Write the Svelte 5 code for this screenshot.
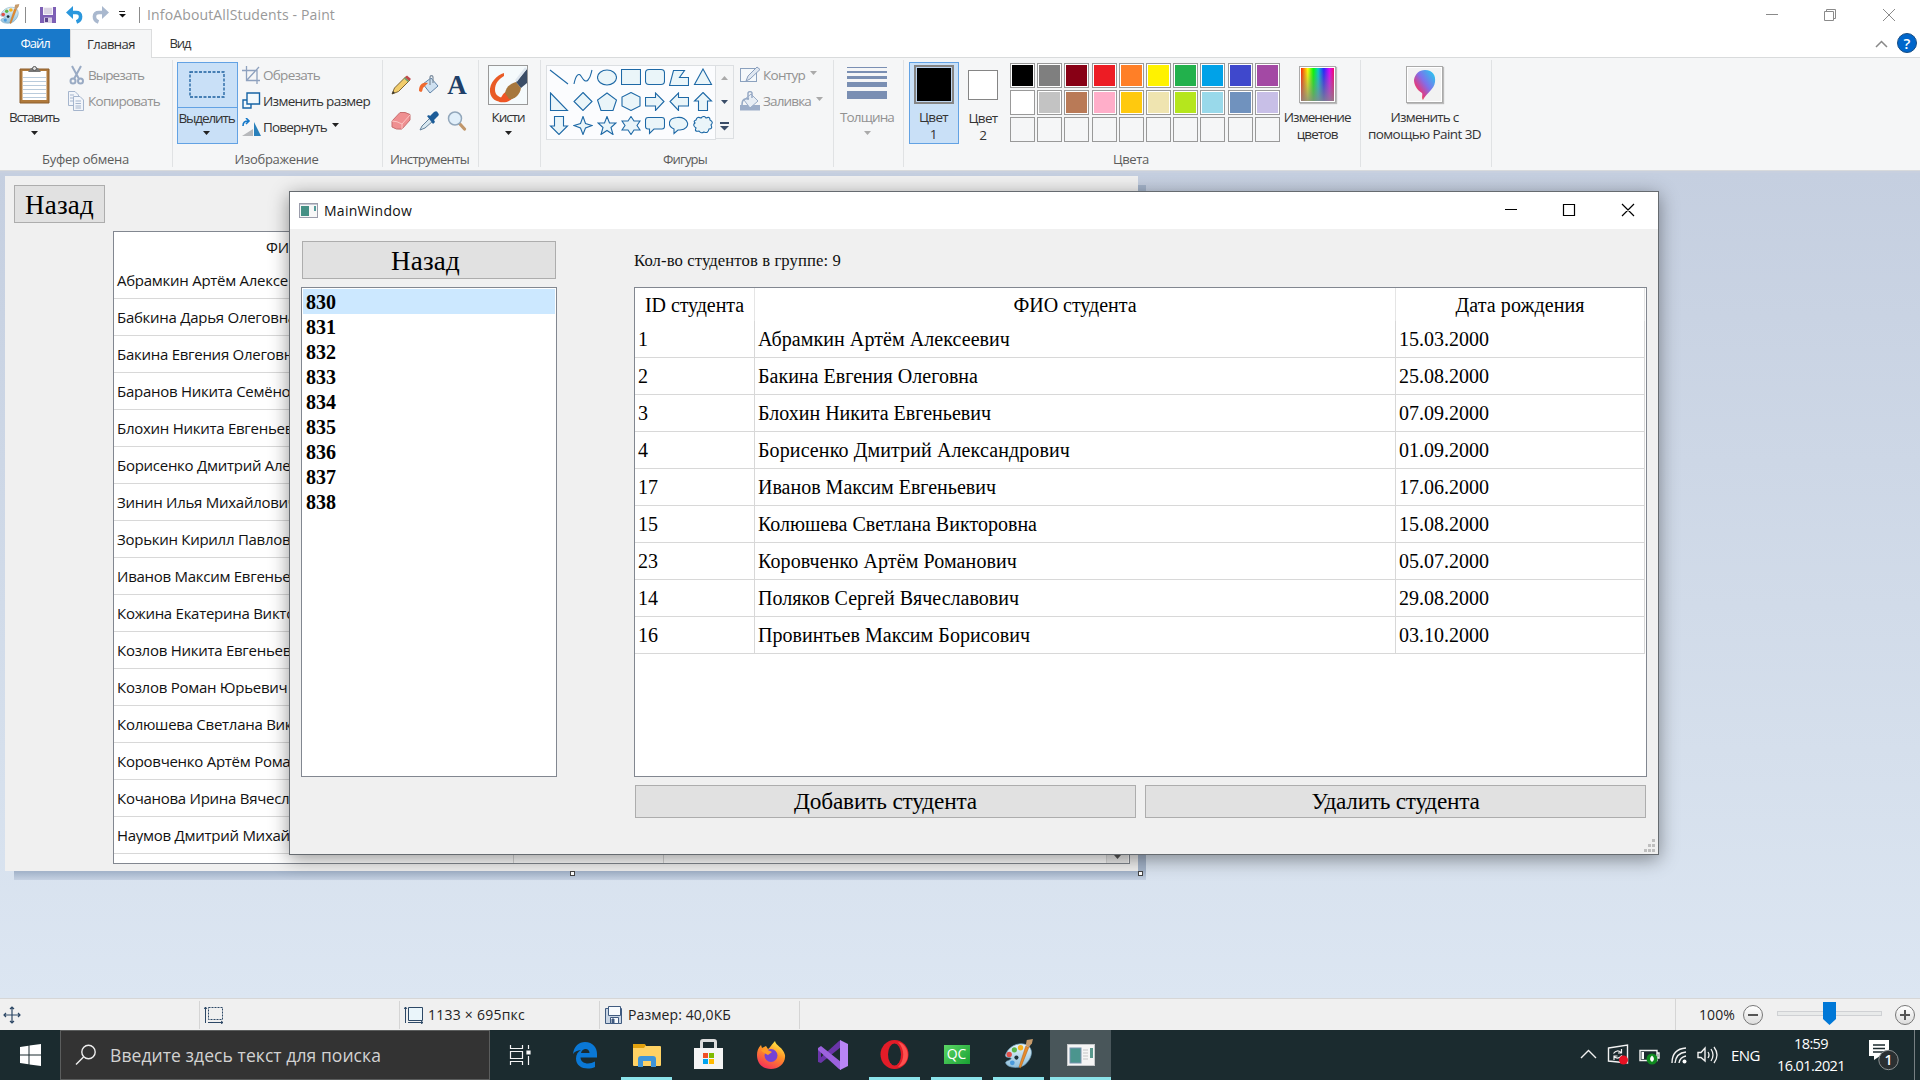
<script>
  // Spreads or tightens a label's letters so that it takes the given width.
  function fit(node, width) {
    if (!width) return;
    const natural = node.getBoundingClientRect().width;
    node.style.letterSpacing = (width - natural) / node.textContent.length + 'px';
  }

  const row1 = ['#000000', '#7f7f7f', '#880015', '#ed1c24', '#ff7f27', '#fff200', '#22b14c', '#00a2e8', '#3f48cc', '#a349a4'];
  const row2 = ['#ffffff', '#c3c3c3', '#b97a57', '#ffaec9', '#ffc90e', '#efe4b0', '#b5e61d', '#99d9ea', '#7092be', '#c8bfe7'];
  const palette = [...row1, ...row2, ...Array(10).fill(null)];

  const shapes = [
    'M1 2L19 16', 'M1 16C3 6 6 5 8 8S12 15 15 12S18 5 19 2', 'M19.500 9.500A9.500 7.500 0 1 1 .5 9.500A9.500 7.500 0 1 1 19.500 9.500Z',
    'M.5 1.500H19.500V16.500H.5Z', 'M4 1.500H16Q19.500 1.500 19.500 5V13Q19.500 16.500 16 16.500H4Q.5 16.500 .5 13V5Q.5 1.500 4 1.500Z',
    'M4.500 2.500H15.500L10.500 9.500H19.500V17.500H.5Z', 'M10 1L18.500 16.500H1.500Z',
    'M1.500 1L18.500 18.500H1.500Z', 'M10 .5L19 9.500L10 18.500L1 9.500Z', 'M10 1L19.500 8L16 18.500H4L.5 8Z',
    'M10 .5L19 5V14L10 18.500L1 14V5Z', 'M.5 5.500H10.500V1L19 9.500L10.500 18.500V14H.5Z', 'M19.500 5.500H9.500V1L1 9.500L9.500 18.500V14H19.500Z',
    'M10 .5L18.500 9H14.500V18.500H5.500V9H1.500Z',
    'M5.500 .5H14.500V10H18.500L10 18.500L1.500 10H5.500Z', 'M10 .5L12.500 7.500L19 9.500L12.500 12L10 18.500L7.500 12L1 9.500L7.500 7.500Z',
    'M10 .5L12.500 7H19L14 11.500L16 18.500L10 14.500L4 18.500L6 11.500L1 7H7.500Z',
    'M10 .5L13 5H19L16 9.500L19 14H13L10 18.500L7 14H1L4 9.500L1 5H7Z',
    'M3 1.500H17Q19.500 1.500 19.500 4V10.500Q19.500 13 17 13H9L4.500 17.500V13H3Q.5 13 .5 10.500V4Q.5 1.500 3 1.500Z',
    'M5 13C-2 10 -1 2 8 1.500C20 0 23 13 11 14H9L5 17.500Z',
    'M3 4Q4 0 8 2Q11 -1 13 2Q17 0 17 4Q21 6 18 9Q20 13 16 13Q15 18 11 16Q8 18 6 15Q1 16 3 12Q-1 9 2 7Q0 5 3 4Z'
  ];

  // Only the part of each name left of the front window shows.
  const canvasRows = [
    'Абрамкин Артём Алексе', 'Бабкина Дарья Олеговна', 'Бакина Евгения Олеговн', 'Баранов Никита Семёно',
    'Блохин Никита Евгеньев', 'Борисенко Дмитрий Але', 'Зинин Илья Михайлович', 'Зорькин Кирилл Павлов',
    'Иванов Максим Евгенье', 'Кожина Екатерина Викто', 'Козлов Никита Евгеньев', 'Козлов Роман Юрьевич',
    'Колюшева Светлана Вик', 'Коровченко Артём Рома', 'Кочанова Ирина Вячесла', 'Наумов Дмитрий Михайл'
  ];

  const groups = ['830', '831', '832', '833', '834', '835', '836', '837', '838'];

  const students = [
    ['1', 'Абрамкин Артём Алексеевич', '15.03.2000', 252],
    ['2', 'Бакина Евгения Олеговна', '25.08.2000', 220],
    ['3', 'Блохин Никита Евгеньевич', '07.09.2000', 233],
    ['4', 'Борисенко Дмитрий Александрович', '01.09.2000', 312],
    ['17', 'Иванов Максим Евгеньевич', '17.06.2000', 238],
    ['15', 'Колюшева Светлана Викторовна', '15.08.2000', 279],
    ['23', 'Коровченко Артём Романович', '05.07.2000', 259],
    ['14', 'Поляков Сергей Вячеславович', '29.08.2000', 261],
    ['16', 'Провинтьев Максим Борисович', '03.10.2000', 272]
  ];
</script>

{#snippet text(value, width)}<span class="t" use:fit={width}>{value}</span>{/snippet}

{#snippet caret(cls)}<svg class="caret {cls}" width="7" height="4"><path d="M0 0H7L3.500 4Z" /></svg>{/snippet}

{#snippet paintLogo(size)}
  <svg width={size} height={size} viewBox="0 0 30 30">
    <defs><linearGradient id="pal{size}" x1="0" y1="0" x2="0" y2="1"><stop offset="0" stop-color="#e6f4fa" /><stop offset="1" stop-color="#8fc0dc" /></linearGradient></defs>
    <path d="M3 14C7 5 19 2 25 7C30 12 27 20 21 25C16 29 5 28 3 24C1 21 7 21 8 19C8 17 0 19 3 14Z" fill="url(#pal{size})" stroke="#6d9db9" stroke-width=".7" />
    <circle cx="13" cy="18" r="2" fill="#1e333c" /><circle cx="6" cy="15" r="2.600" fill="#e0504a" /><circle cx="11" cy="10.500" r="2.500" fill="#5cb548" /><circle cx="17" cy="8.500" r="2.600" fill="#f6b221" /><circle cx="9" cy="23" r="2.300" fill="#4a9bdc" />
    <path d="M17 28L15.500 27L22 7L25 8Z" fill="#e98b2a" stroke="#a95e16" stroke-width=".5" /><path d="M22 6L23 1L29 0L28 4L25 8Z" fill="#c79b6b" />
  </svg>
{/snippet}

{#snippet pencil(a, b)}
  <path d="M1 19L3.500 13L15 1.500L19 5L7.500 16.500Z" fill={a} stroke={b} stroke-width="1" />
  <path d="M1 19L2 16L4 18Z" fill="#333" />
{/snippet}

<div class="desktop">
  <header class="titlebar">
    <div class="logo">{@render paintLogo(21)}</div>
    <i class="bar first"></i>
    <svg class="save" width="16" height="16"><path d="M0 0H16V16H0Z" fill="#7d5fb5" /><path d="M3 0H13V8H3Z" fill="#f5f3f8" /><path d="M4 2H12M4 4H12M4 6H12" stroke="#c0b4cf" /><path d="M4 10.500H12V16H4Z" fill="#d8cfe5" /><path d="M5 11H8V15H5Z" fill="#5e478c" /></svg>
    <svg class="undo" width="17" height="18"><path d="M4 6.500H10C16 6.500 16 14 10.500 16" fill="none" stroke="#2a97dd" stroke-width="3.600" /><path d="M0 6.500L7 0V13Z" fill="#2a97dd" /></svg>
    <svg class="redo" width="17" height="18"><path d="M13 6.500H7C1 6.500 1 14 6.500 16" fill="none" stroke="#a9b8ce" stroke-width="3.600" /><path d="M17 6.500L10 0V13Z" fill="#a9b8ce" /></svg>
    <svg class="more" width="8" height="7"><path d="M1 .5H7" stroke="#222" /><path d="M1 3H8L4.500 6.500Z" fill="#111" /></svg>
    <i class="bar second"></i>
    <span class="title">{@render text('InfoAboutAllStudents - Paint', 188)}</span>
    <svg class="controls" width="132" height="16" fill="none" stroke="#8a8a8a"><path d="M0 7.500H12M58.500 4.500H67.500V13.500H58.500ZM60.500 4V2.500H69.500V11.500H68M117 2L129 14M129 2L117 14" /></svg>
  </header>

  <nav class="tabs">
    <div class="tab file">{@render text('Файл', 29)}</div>
    <div class="tab home">{@render text('Главная', 48)}</div>
    <div class="tab view">{@render text('Вид', 21)}</div>
    <svg class="fold" width="13" height="8"><path d="M1 7L6.500 1.500L12 7" fill="none" stroke="#888" stroke-width="1.500" /></svg>
    <div class="help">?</div>
  </nav>

  <section class="ribbon">
    <div class="group clipboard">
      <div class="body">
        <div class="big paste">
          <svg width="31" height="38"><path d="M1 3H30V37H1Z" fill="#b07a3c" stroke="#8d5f2c" /><path d="M3.500 5H27.500V34H3.500Z" fill="#fff" /><path d="M4 11.500H27M4 15.500H27M4 19.500H27M4 23.500H27M4 27.500H27M4 31.500H27" stroke="#b9cbdc" /><path d="M9 6L12 2H19L22 6Z" fill="#777" /><circle cx="15.500" cy="2.500" r="2" fill="#ddd" stroke="#555" /></svg>
          {@render text('Вставить', 50)}
          {@render caret('')}
        </div>
        <div class="lines">
          <div class="line off"><svg width="18" height="20" fill="none" stroke="#9aabc4" stroke-width="2"><path d="M4 1L11 14M13 1L6 14" /><circle cx="5" cy="16" r="2.500" /><circle cx="12.500" cy="16" r="2.500" /></svg>{@render text('Вырезать', 56)}</div>
          <div class="line off"><svg width="18" height="20" fill="#f2f5fa" stroke="#a5b5cd"><path d="M.5 .5H7L10.500 4V14.500H.5ZM2 4H6M2 7H6M2 10H6" /><path d="M5.500 5.500H12L15.500 9V19.500H5.500ZM7.500 10H13M7.500 12.500H13M7.500 15H13M7.500 17H13" /></svg>{@render text('Копировать', 72)}</div>
        </div>
      </div>
      <div class="caption">{@render text('Буфер обмена', 87)}</div>
    </div>

    <div class="group image">
      <div class="body">
        <div class="select">
          <div class="half top"><svg width="36" height="28"><rect x="1" y="1" width="34" height="25" fill="none" stroke="#1b5f9e" stroke-width="1.300" stroke-dasharray="3 1.500" /></svg></div>
          <div class="half low">{@render text('Выделить', 56)}{@render caret('')}</div>
        </div>
        <div class="lines">
          <div class="line off"><svg width="18" height="19" fill="none" stroke="#8ea1be" stroke-width="1.300"><path d="M4.500 0V14.500H18M0 4.500H15V18M5 14L17 1" /></svg>{@render text('Обрезать', 57)}</div>
          <div class="line"><svg width="18" height="18" fill="#f3f9fc" stroke="#1764a5" stroke-width="1.400"><path d="M1 8H9V16H1Z" /><path d="M5 1H17.500V12H5Z" /></svg>{@render text('Изменить размер', 107)}</div>
          <div class="line"><svg width="20" height="19"><path d="M0 18L11 11V18Z" fill="#b7b9bc" /><path d="M12 4L19 18H12Z" fill="#2980bb" /><path d="M1 8C1 4 3 3 6 3M4 0L7 3L4 6" fill="none" stroke="#1477c8" stroke-width="1.600" /></svg>{@render text('Повернуть', 64)}{@render caret('side')}</div>
        </div>
      </div>
      <div class="caption">{@render text('Изображение', 84)}</div>
    </div>

    <div class="group tools">
      <div class="body toolgrid">
        <svg viewBox="0 0 20 20">{@render pencil('#f2cd6c', '#7d6534')}<path d="M14 2.500L16 .5L20 4L18 6Z" fill="#c0494d" /><path d="M13 3.500L14 2.500L18 6L17 7Z" fill="#62a070" /></svg>
        <svg viewBox="0 0 20 20"><path d="M4 9L12 3L19 11L11 18Z" fill="#cfe1f1" stroke="#5f83a8" /><path d="M0 16C0 9 4 7 9 8L5 12C3 13 4 17 2 17Z" fill="#f06a2f" /><path d="M11 10V2Q12.500 -1 14 2V8" fill="none" stroke="#8393a4" stroke-width="1.300" /></svg>
        <div class="letter">A</div>
        <svg viewBox="0 0 20 20"><path d="M9 1.500Q14 .5 19 3.500L19 9L11 18Q5 19 1 16V10Z" fill="#ef8f91" stroke="#c76f70" /><path d="M1 10Q6 10 11 13L19 4M11 13V18" fill="none" stroke="#fbc5c3" /></svg>
        <svg viewBox="0 0 20 20"><path d="M1 19L3 15L11 7L14 10L6 17Z" fill="#d8e7ef" stroke="#63819a" /><path d="M8 5L10 4L11 5L15 1Q18 -1 19 2Q21 4 18 6L15 9L16 11L14 13Z" fill="#1c5c98" /></svg>
        <svg viewBox="0 0 20 20"><path d="M12 12L17.500 18" stroke="#c1976b" stroke-width="3.200" stroke-linecap="round" /><circle cx="8" cy="7.500" r="6.500" fill="#e1effa" stroke="#92a7bb" stroke-width="1.500" /></svg>
      </div>
      <div class="caption">{@render text('Инструменты', 79)}</div>
    </div>

    <div class="group brushes">
      <div class="big">
        <svg width="40" height="40"><rect x=".5" y=".5" width="39" height="39" fill="#f5fafc" stroke="#999" /><path d="M16 8C9 10 1 18 2 27C3 34 8 37 16 37L22 33C13 34 7 31 7 25C7 18 11 14 16 11Z" fill="#e95b26" /><path d="M11 37C14 30 16 27 20 26L25 33C21 37 17 38 11 37Z" fill="#ef5524" /><path d="M17 28C18 22 23 18 28 17L33 23C32 30 26 35 21 34Z" fill="#a7773d" /><path d="M28 17L39 4V18L33 23Z" fill="#3b4d66" /><path d="M28 16L38 3" stroke="#dfe7ef" stroke-width="2.500" /></svg>
        {@render text('Кисти', 33)}
        {@render caret('')}
      </div>
    </div>

    <div class="group shapes">
      <div class="body">
        <div class="gallery">
          {#each shapes as d, i}
            <svg width="20" height="19" class:open={i < 2}><path {d} /></svg>
          {/each}
        </div>
        <div class="spin">
          <div>{@render caret('up dim')}</div><div>{@render caret('blue')}</div>
          <div><svg width="9" height="9"><path d="M0 1H9" stroke="#3a4d68" stroke-width="2" /><path d="M0 4H9L4.500 8.500Z" fill="#3a4d68" /></svg></div>
        </div>
        <div class="lines">
          <div class="line off"><svg width="21" height="20"><rect x=".5" y="3.500" width="16" height="13" fill="#f4f8fb" stroke="#8ba1be" /><path d="M6 16L8 11L17 2L20 4.500L10 14Z" fill="#dfe7f1" stroke="#899ebc" /></svg>{@render text('Контур', 42)}{@render caret('side dim')}</div>
          <div class="line off"><svg width="21" height="20"><path d="M0 14H20V19.500H0Z" fill="#9daec9" /><path d="M4 9L11 3L18 10L10 17Z" fill="#e8eef5" stroke="#98abc6" /><path d="M2 14C2 8 5 7 9 8M8 9V2Q10 -1 12 2V7" fill="none" stroke="#98abc6" stroke-width="1.500" /></svg>{@render text('Заливка', 48)}{@render caret('side dim')}</div>
        </div>
      </div>
      <div class="caption">{@render text('Фигуры', 44)}</div>
    </div>

    <div class="group weight">
      <div class="big off">
        <svg width="40" height="40" fill="#7a8fb3"><path d="M0 2H40V3H0ZM0 6H40V8H0ZM0 11H40V14H0ZM0 17H40V22H0ZM0 26H40V34H0Z" /></svg>
        {@render text('Толщина', 54)}
        {@render caret('dim')}
      </div>
    </div>

    <div class="group colors">
      <div class="body">
        <div class="color one"><div class="swatch"></div><span>{@render text('Цвет', 29)}</span><span>1</span></div>
        <div class="color two"><div class="swatch"></div><span>{@render text('Цвет', 29)}</span><span>2</span></div>
        <div class="palette">
          {#each palette as color}
            <div class="cell" class:empty={!color}>{#if color}<div style:background={color}></div>{/if}</div>
          {/each}
        </div>
        <div class="color edit"><div class="rainbow"></div><span>{@render text('Изменение', 67)}</span><span>{@render text('цветов', 41)}</span></div>
      </div>
      <div class="caption">{@render text('Цвета', 36)}</div>
    </div>

    <div class="group paint3d">
      <div class="color">
        <div class="pin"><svg width="24" height="32"><defs><linearGradient id="pin" x1="1" y1="0" x2="0" y2="1"><stop offset="0" stop-color="#18d7f0" /><stop offset=".45" stop-color="#8070ea" /><stop offset=".7" stop-color="#dc3d86" /><stop offset="1" stop-color="#ffb51c" /></linearGradient></defs><path d="M12 1C20 1 23 7 22 13C21 21 14 23 10 31C8 29 10 26 9 24C4 21 1 16 1 11C2 5 6 1 12 1Z" fill="url(#pin)" /></svg></div>
        <span>{@render text('Изменить с', 68)}</span><span>{@render text('помощью Paint 3D', 113)}</span>
      </div>
    </div>
  </section>

  <main class="workspace">
    <div class="canvas-shadow"></div>
    <div class="canvas">
      <div class="button back">{@render text('Назад', 69)}</div>
      <div class="canvas-table">
        <div class="chead">ФИО</div>
        {#each canvasRows as name}
          <div class="crow"><span>{name}</span><i></i><i></i></div>
        {/each}
        <div class="crow last"><span></span><i></i><i></i><b><svg width="7" height="4"><path d="M0 0H7L3.500 4Z" fill="#555" /></svg></b></div>
      </div>
    </div>
    <i class="handle bottom"></i>
    <i class="handle corner"></i>

    <div class="window">
      <div class="wintitle">
        <svg width="19" height="16"><rect x=".5" y=".5" width="18" height="14" fill="#f7f7f7" stroke="#9b9dab" /><rect x="2" y="3" width="8" height="10" fill="#459085" /><path d="M16 3V8" stroke="#549b9a" stroke-width="2" /><path d="M1 1.500H18" stroke="#c5c8d2" /></svg>
        {@render text('MainWindow', 88)}
        <svg class="wincontrols" width="132" height="14" fill="none" stroke="#000"><path d="M0 6.500H12M58.500 1.500H69.500V12.500H58.500ZM117 1L129 13M129 1L117 13" stroke-width="1.200" /></svg>
      </div>
      <div class="winbody">
        <div class="left">
          <div class="button">{@render text('Назад', 69)}</div>
          <div class="list">
            {#each groups as group, i}
              <div class:selected={i === 0}>{group}</div>
            {/each}
          </div>
        </div>
        <div class="right">
          <div class="count">{@render text('Кол-во студентов в группе: 9', 207)}</div>
          <div class="table">
            <div class="row head"><div>{@render text('ID студента', 99)}</div><div>{@render text('ФИО студента', 123)}</div><div>{@render text('Дата рождения', 129)}</div></div>
            {#each students as [id, name, born, width]}
              <div class="row"><div>{id}</div><div>{@render text(name, width)}</div><div>{born}</div></div>
            {/each}
          </div>
          <div class="actions">
            <div class="button">{@render text('Добавить студента', 183)}</div>
            <div class="button">{@render text('Удалить студента', 168)}</div>
          </div>
        </div>
      </div>
      <svg class="grip" width="11" height="13" fill="#bfbfbf"><path d="M8 0H11V3H8ZM4 5H7V8H4ZM8 5H11V8H8ZM0 10H3V13H0ZM4 10H7V13H4ZM8 10H11V13H8Z" /></svg>
    </div>
  </main>

  <footer class="status">
    <div class="cell-s"><svg width="18" height="18" fill="none" stroke="#2d4866" stroke-width="1.200"><path d="M9 1V17M1 9H17M7 3L9 1L11 3M7 15L9 17L11 15M3 7L1 9L3 11M15 7L17 9L15 11" /></svg></div>
    <div class="cell-s"><svg width="20" height="18" fill="none" stroke="#2d4866"><path d="M1.500 17V1M0 3L1.500 1L3 3M4 16.500H19M17 15L19 16.500L17 18" /><path d="M4.500 1.500H18.500V13.500H4.500Z" stroke-dasharray="2 1" /></svg></div>
    <div class="cell-s"><svg width="20" height="18" fill="none" stroke="#2d4866"><path d="M1.500 17V1M0 3L1.500 1L3 3M4 16.500H19M17 15L19 16.500L17 18" /><path d="M4.500 1.500H18.500V14.500H4.500Z" fill="#eaf5fa" /></svg>{@render text('1133 × 695пкс', 97)}</div>
    <div class="cell-s disk"><svg width="18" height="18" fill="#f7fafd" stroke="#405b80"><path d="M.5 2.500H16.500V17.500H.5Z" fill="#c9d5e4" /><path d="M3.500 .5H15.500V9.500H3.500ZM5.500 11.500H13.500V17.500H5.500Z" /><path d="M7 13H9V17H7Z" fill="#405b80" /></svg>{@render text('Размер: 40,0КБ', 103)}</div>
    <div class="zoom">
      {@render text('100%', 36)}
      <div class="round"><svg width="12" height="12"><path d="M1 6H11" stroke="#555" stroke-width="2" /></svg></div>
      <div class="track"><svg width="13" height="23"><path d="M0 0H13V17L6.500 23L0 17Z" fill="#0078d7" /></svg></div>
      <div class="round"><svg width="12" height="12"><path d="M1 6H11M6 1V11" stroke="#555" stroke-width="2" /></svg></div>
    </div>
  </footer>

  <footer class="taskbar">
    <div class="start"><svg width="21" height="26" viewBox="0 0 21 26" fill="#fff"><path d="M0 5L8.500 3.800V12.500H0ZM9.500 3.600L21 2V12.500H9.500ZM0 13.500H8.500V22.200L0 21ZM9.500 13.500H21V24L9.500 22.400Z" /></svg></div>
    <div class="search"><svg width="22" height="22" fill="none" stroke="#eee" stroke-width="1.400"><circle cx="13.500" cy="8" r="6.700" /><path d="M8.500 13L1 20.500" /></svg>{@render text('Введите здесь текст для поиска', 271)}</div>
    <div class="app plain"><svg width="22" height="20" fill="none" stroke="#f4f4f4" stroke-width="1.200"><path d="M1.500 0V3.500H13.500V0M1.500 20V16.500H13.500V20M1.500 6.500H13.500V13.500H1.500ZM19.500 0V4M19.500 11V20" /><path d="M18 6H21V9H18Z" fill="#fff" /></svg></div>
    <div class="app plain"><svg width="26" height="28" viewBox="0 0 26 28"><path fill="#0a78d6" d="M1 13C2 5 7 1 13 1C21 1 25 7 25 13V16.500H8.500C9 23 17 24 23 20.500V26C15 29.500 4 27 4 17.500C4 13.500 6 10.500 9 9C5 9.300 3 10.500 1 13ZM9 12H17.500C17.500 6.800 10 6.800 9 12Z" fill-rule="evenodd" /></svg></div>
    <div class="app on"><svg width="28" height="24"><path d="M0 2Q0 1 1 1H11L13 3H27Q28 3 28 4V22Q28 23 27 23H1Q0 23 0 22Z" fill="#ffd264" /><path d="M0 1H11L13 2L11 5H0Z" fill="#e3a20e" /><path d="M5 24V16Q5 13 8 13H20Q23 13 23 16V24H18V18H10V24Z" fill="#3f95d8" /></svg></div>
    <div class="app plain"><svg width="30" height="31"><path d="M7.500 12V3Q7.500 1.500 9 1.500H20Q21.500 1.500 21.500 3V12" fill="none" stroke="#ddd" stroke-width="3" /><path d="M0 9H29V30H0Z" fill="#f4f4f4" /><path d="M9 14H14V19H9Z" fill="#f04f25" /><path d="M15 14H20V19H15Z" fill="#7fba00" /><path d="M9 20H14V25H9Z" fill="#00a4ef" /><path d="M15 20H20V25H15Z" fill="#ffb900" /></svg></div>
    <div class="app plain"><svg width="30" height="30"><defs><linearGradient id="fox" x1=".8" y1="0" x2=".3" y2="1"><stop offset="0" stop-color="#fff44a" /><stop offset=".45" stop-color="#ff9126" /><stop offset="1" stop-color="#f52e5a" /></linearGradient></defs><path d="M19 1C20 6 27 7 29 15C30 24 22 29 15 29C7 29 1 24 1 15C1 11 2 8 5 5L6 8L10 6L12 9C14 8 16 4 19 1Z" fill="url(#fox)" /><circle cx="15" cy="15.500" r="6.500" fill="#7542d5" /><path d="M5 10C10 8 12 10 16 12L12 15C10 14 7 13 5 10Z" fill="#ff9b27" /></svg></div>
    <div class="app plain"><svg width="30" height="30"><path d="M0 8L3 10V20L0 22Z" fill="#6a35a9" /><path d="M0 22L3 23L23 7V0L21 1L0 20Z" fill="#6a35a9" /><path d="M3 6L0 8V10L21 29L23 30V22Z" fill="#9c62de" /><path d="M22 0L30 4V26L22 30Z" fill="#b985f6" /></svg></div>
    <div class="app on"><svg width="29" height="29"><ellipse cx="14.500" cy="14.500" rx="14" ry="14.500" fill="#e21c28" /><path d="M18 2C31 5 31 25 18 27C25 20 25 9 18 2Z" fill="#fd514f" /><ellipse cx="14.500" cy="14.500" rx="6.500" ry="11" fill="#1b2b2f" /></svg></div>
    <div class="app on"><div class="qc">QC</div></div>
    <div class="app on">{@render paintLogo(31)}</div>
    <div class="app active"><svg width="28" height="24"><rect x=".5" y="1.500" width="27" height="21" fill="#f5f5f5" stroke="#c5c8ca" /><rect x="3" y="5" width="11" height="15" fill="#4b958e" stroke="#7893ae" /><path d="M16 7H21M16 10H21M16 13H21M16 16H21" stroke="#ddd" stroke-width="2" /><path d="M24.500 5V15" stroke="#59988c" stroke-width="3" /></svg></div>
    <div class="tray">
      <svg width="132" height="24" fill="none" stroke="#f2f2f2" stroke-width="1.400">
        <path d="M1 15L8.500 7.500L16 15" />
        <path d="M28.500 5L47.500 2V20L28.500 18Z" /><path d="M33.500 10.500Q37 6 41 9.500M41.500 6V10H38M42 12.500Q38 17 34 13.500M34 17V13H37.500" stroke-width="1.200" /><circle cx="43.500" cy="17" r="4.500" fill="#e81123" stroke="none" />
        <path d="M60 7.500H77V17.500H60ZM77 10H79V15H77" /><path d="M61.500 9H64V16H61.500Z" fill="#fff" stroke="none" /><circle cx="72" cy="16" r="5.500" fill="#108a20" stroke="none" /><path d="M72 12.500Q76 16 72 19Q68 16 72 12.500Z" fill="#fff" stroke="none" />
        <path d="M92 20Q92 6 106 5M95 20Q96 10 106 9M99 20Q100 14 106 13" /><circle cx="104.500" cy="18.500" r="2" fill="#fff" stroke="none" />
        <path d="M118 9.500H121L125 5V18L121 14.500H118Z" />
      </svg>
      <svg class="waves" width="12" height="20" fill="none" stroke="#f2f2f2" stroke-width="1.300"><path d="M1 7Q3 10 1 13M4 4Q8 10 4 16M7 2Q13 10 7 18" /></svg>
      <span class="lang">{@render text('ENG', 29)}</span>
      <div class="clock"><span>{@render text('18:59', 34)}</span><span>{@render text('16.01.2021', 68)}</span></div>
      <svg class="note" width="32" height="36"><path d="M0 3H20V19H11L5 23V19H0Z" fill="#fff" /><path d="M4 8H16M4 11.500H16M4 15H16" stroke="#1c2b2f" stroke-width="1.300" /><circle cx="19.500" cy="23" r="9.700" fill="#2b3032" stroke="#8c9192" /><text x="19.500" y="28" text-anchor="middle">1</text></svg>
      <i class="peek"></i>
    </div>
  </footer>
</div>

<style>
  :global(body) { margin: 0; overflow: hidden; }
  .desktop { width: 1920px; height: 1080px; display: flex; flex-direction: column; background: #fff; font: 14px/18px "Open Sans", "Noto Sans", sans-serif; color: #333; overflow: hidden; }
  .desktop * { box-sizing: border-box; }
  svg { display: block; flex: none; }
  .t { display: inline-block; white-space: nowrap; }
  i { display: block; }

  .titlebar { height: 29px; display: flex; align-items: center; flex: none; }
  .logo { width: 26px; margin-left: -1px; }
  .bar { width: 1px; height: 16px; background: #8c8c8c; }
  .save { margin-left: 14px; }
  .undo { margin-left: 10px; }
  .redo { margin-left: 9px; }
  .more { margin-left: 9px; }
  .second { margin-left: 13px; }
  .title { margin-left: 7px; color: #999; }
  .controls { margin: 0 22px 0 auto; }

  .tabs { height: 29px; display: flex; align-items: center; flex: none; font-size: 13px; box-shadow: inset 0 -1px #d9dbdc; }
  .tab { height: 29px; display: flex; align-items: center; justify-content: center; padding-bottom: 1px; }
  .file { width: 70px; height: 28px; margin-bottom: 1px; padding: 0; background: #1979ca; color: #fff; }
  .home { width: 82px; background: #f5f6f7; border: 1px solid #dcddde; border-bottom: 0; }
  .view { width: 56px; }
  .fold { margin-left: auto; margin-right: 9px; }
  .help { width: 20px; height: 20px; margin-right: 3px; margin-bottom: 2px; border-radius: 50%; background: #0066cb; border: 1px solid #174d83; color: #fff; text-align: center; font-weight: 600; font-size: 15px; }

  .ribbon { height: 113px; flex: none; display: flex; background: #f5f6f7; border-bottom: 1px solid #d8dadc; font-size: 13.5px; }
  .group { display: flex; flex-direction: column; padding-top: 4px; position: relative; background: linear-gradient(#e0e2e4, #e0e2e4) right 2px / 1px 107px no-repeat; }
  .body { display: flex; height: 87px; }
  .caption { height: 20px; text-align: center; color: #5c5c5c; font-size: 13px; line-height: 20px; padding-right: 3px; }
  .clipboard { width: 173px; padding-right: 1px; }
  .clipboard .caption { padding-right: 1px; }
  .image { width: 210px; }
  .tools { width: 96px; }
  .brushes { width: 62px; }
  .shapes { width: 293px; }
  .shapes .caption { padding-right: 5px; }
  .weight { width: 70px; }
  .colors { width: 457px; }
  .paint3d { width: 131px; }
  .big { display: flex; flex-direction: column; align-items: center; padding: 3px 4px 0 0; }
  .big svg:first-child { margin-bottom: 3px; }
  .big .caret { margin-top: 5px; }
  .paste { width: 60px; margin-left: 4px; padding: 3px 0 0; }
  .paste svg:first-child { margin: 1px 0 4px; }
  .caret path { fill: #222; }
  .dim path { fill: #aaa; }
  .blue path { fill: #3a4d68; }
  .up { transform: rotate(180deg); }
  .side { margin: -5px 0 0 5px; }
  .off { color: #929292; }
  .lines { display: flex; flex-direction: column; }
  .line { height: 26px; display: flex; align-items: center; }
  .clipboard .lines { margin-left: 4px; }
  .clipboard .line svg { margin-right: 2px; }
  .image .lines { margin-left: 4px; }
  .image .line svg:first-child { width: 21px; }
  .select { width: 61px; height: 82px; margin-left: 4px; border: 1px solid #62a2e4; background: #c9e0f7; }
  .half { display: flex; flex-direction: column; align-items: center; }
  .top { height: 45px; padding: 8px 1px 0 0; border-bottom: 1px solid #62a2e4; }
  .low { padding: 1px 2px 0 0; }
  .low .caret { margin-top: 4px; }
  .toolgrid { display: grid; grid-template-columns: repeat(3, 28px); grid-template-rows: 36px 36px; place-items: center; padding: 5px 8px 0 4px; }
  .toolgrid svg { width: 20px; height: 20px; }
  .letter { font: bold 27px/24px "Liberation Serif", serif; color: #203f68; }
  .gallery { width: 170px; height: 75px; margin: 3px 0 0 5px; padding: 2px 0 0 2px; display: grid; grid-template-columns: repeat(7, 24px); grid-auto-rows: 24px; border: 1px solid #dcdfe2; background: #fbfcfe; }
  .gallery svg { fill: #eaf5f9; stroke: #1e69a6; stroke-width: 1.1; }
  .gallery .open { fill: none; }
  .spin { width: 18px; height: 74px; margin-top: 3px; border: 1px solid #dcdfe2; border-left: 0; }
  .spin div { height: 24px; display: flex; align-items: center; justify-content: center; }
  .shapes .lines { margin: 0 0 0 6px; }
  .shapes .line svg:first-child { margin-right: 2px; }
  .color { display: flex; flex-direction: column; align-items: center; line-height: 17px; }
  .color > span { height: 17px; }
  .one { width: 50px; height: 82px; margin-left: 5px; padding: 2px 1px 0 0; border: 1px solid #62a2e4; background: #c9e0f7; }
  .one .swatch { width: 40px; height: 40px; margin-bottom: 5px; border: 2px solid #858585; outline: 1px solid #bcd4ef; outline-offset: -3px; background: #000; }
  .two { width: 50px; padding: 8px 2px 0 0; }
  .two .swatch { width: 30px; height: 30px; margin-bottom: 10px; border: 1px solid #858585; background: #fff; }
  .palette { display: grid; grid-template-columns: repeat(10, 25px); grid-auto-rows: 25px; gap: 2px 2.2px; margin: 1px 0 0 1px; }
  .cell { border: 1px solid #999; padding: 1px; background: #fff; }
  .cell div { height: 21px; }
  .cell.empty { background: #f5f6f7; }
  .edit { margin-left: 4px; padding-top: 4px; }
  .rainbow, .pin { width: 37px; height: 37px; margin-bottom: 6px; border: 1px solid #aaa; box-shadow: 1px 1px 1px #bbb; outline: 1px solid #fff; outline-offset: -2px; }
  .rainbow { background: linear-gradient(transparent, #888d), linear-gradient(90deg, red, #ff0 22%, #0f0 38%, #0cc 52%, #22f 68%, #d0f 84%, #f04); }
  .pin { display: flex; align-items: center; justify-content: center; background: #f2f2f2; }
  .paint3d { padding-top: 8px; }
  .paint3d .color { margin-right: 4px; }

  .workspace { height: 827px; flex: none; position: relative; overflow: hidden; background: linear-gradient(#c5cfe0, #d5dfec 70%, #dce6f2); box-shadow: inset 0 2px #c8d0df; }
  .canvas-shadow { position: absolute; left: 14px; top: 14px; width: 1132px; height: 695px; background: linear-gradient(to top, #c5d1e2, #a4b4ca 8px); }
  .canvas { position: absolute; left: 5px; top: 5px; width: 1133px; height: 695px; padding: 9px; background: #f0f0f0; }
  .button { display: flex; align-items: center; justify-content: center; background: #e1e1e1; border: 1px solid #adadad; color: #000; font: 27px/30px "Liberation Serif", serif; }
  .back { width: 91px; height: 38px; padding-top: 1px; }
  .canvas-table { width: 1017px; height: 633px; margin: 8px 0 0 99px; border: 1px solid #828790; background: #fff; color: #111; font-size: 15px; letter-spacing: -.27px; overflow: hidden; }
  .chead { width: 175px; height: 30px; padding: 6px 0 0 152px; overflow: hidden; }
  .crow { height: 37px; display: flex; align-items: center; border-bottom: 1px solid #d8d8d8; }
  .crow span { width: 175px; margin-right: 224px; padding-left: 3px; white-space: nowrap; overflow: hidden; }
  .crow i { width: 150px; height: 100%; border-left: 1px solid #d8d8d8; }
  .last { height: 11px; border: 0; }
  .last b { width: 22px; height: 10px; margin-left: 293px; padding: 0 7px; background: #eee; border-left: 1px solid #ddd; }
  .handle { position: absolute; width: 5px; height: 5px; background: #fff; border: 1px solid #444; }
  .bottom { left: 570px; top: 700px; }
  .corner { left: 1138px; top: 700px; }

  .window { position: absolute; left: 289px; top: 20px; width: 1370px; height: 664px; border: 1px solid #666b70; background: #f0f0f0; box-shadow: 0 4px 18px rgba(0, 0, 0, .42); }
  .wintitle { height: 37px; background: #fff; display: flex; align-items: center; color: #111; padding-left: 9px; gap: 6px; }
  .wincontrols { margin: 0 21px 2px auto; }
  .winbody { display: flex; padding: 12px 11px 0; }
  .left { width: 256px; }
  .left .button { width: 254px; height: 38px; margin-left: 1px; padding: 1px 7px 0 0; }
  .list { height: 490px; margin-top: 8px; padding: 1px; border: 1px solid #828790; background: #fff; font: bold 20px/25px "Liberation Serif", serif; color: #000; }
  .list div { padding-left: 3px; height: 25px; line-height: 26px; }
  .selected { background: #cce8ff; }
  .right { width: 1013px; margin-left: 77px; }
  .count { height: 46px; padding-top: 9px; font: 16.67px/22px "Liberation Serif", serif; color: #111; }
  .table { height: 490px; border: 1px solid #828790; background: #fff; font: 20px/24px "Liberation Serif", serif; color: #000; padding-right: 1px; }
  .row { height: 37px; display: grid; grid-template-columns: 120px 641px 1fr; border-bottom: 1px solid #d8d8d8; }
  .row div { border-right: 1px solid #d8d8d8; display: flex; align-items: center; padding-left: 3px; padding-bottom: 1px; }
  .head { height: 33px; border-bottom: 0; }
  .head div { justify-content: center; padding: 0; border-color: #e5e5e5; }
  .actions { display: flex; gap: 9px; margin: 8px 1px 0; }
  .actions .button { flex: 1; height: 33px; padding-bottom: 2px; font-size: 23.3px; }
  .grip { position: absolute; right: 3px; bottom: 2px; }

  .status { height: 32px; flex: none; display: flex; background: #f0f0f0; border-top: 1px solid #d6d6d6; color: #222; }
  .cell-s { width: 200px; display: flex; align-items: center; gap: 4px; padding-left: 4px; background: linear-gradient(#d5d5d5, #d5d5d5) right 2px / 1px 28px no-repeat; }
  .cell-s:first-child { padding-left: 3px; }
  .disk { gap: 5px; padding-left: 5px; }
  .zoom { width: 245px; margin-left: auto; padding-left: 23px; display: flex; align-items: center; border-left: 1px solid #d5d5d5; }
  .round { width: 20px; height: 20px; border: 1px solid #777; border-radius: 50%; background: linear-gradient(#fff, #ddd); display: flex; align-items: center; justify-content: center; flex: none; }
  .zoom .round:nth-of-type(1) { margin-left: 8px; }
  .track { width: 105px; height: 5px; margin: 0 13px 2px 14px; padding-left: 45px; border: 1px solid #cfd1d4; background: #e8eaea; display: flex; align-items: center; }

  .taskbar { height: 50px; flex: none; display: flex; background: #1b2b2f; color: #fff; }
  .start { width: 60px; padding-left: 20px; display: flex; align-items: center; }
  .search { width: 430px; border: 1px solid #5b5d5d; background: #333; display: flex; align-items: center; gap: 13px; padding-left: 14px; color: #d2d2d2; font-size: 17.5px; }
  .app { width: 51px; margin-right: 11px; display: flex; align-items: center; justify-content: center; border-bottom: 3px solid transparent; padding-top: 2px; flex: none; }
  .search + .app { margin-left: 4px; margin-right: 14px; }
  .on { border-color: #8be3ea; }
  .active { width: 61px; margin-left: -5px; background: #49565a; border-color: #8be3ea; }
  .qc { width: 26px; height: 19px; background: linear-gradient(135deg, #5bd565, #19a233); font: 14px/18px "Open Sans", sans-serif; text-align: center; }
  .tray { margin-left: auto; display: flex; align-items: center; }
  .tray > svg:first-child { margin-right: -5px; }
  .waves { margin-right: 12px; }
  .lang { font-size: 15px; width: 46px; }
  .clock { width: 68px; height: 46px; display: flex; flex-direction: column; align-items: center; font-size: 14.5px; line-height: 23px; }
  .clock span { margin-top: -.3px; }
  .note { margin: 0 13px 0 24px; }
  .note text { fill: #fff; font: 600 14px "Open Sans", sans-serif; }
  .peek { width: 6px; height: 50px; border-left: 1px solid #777f82; }
</style>
